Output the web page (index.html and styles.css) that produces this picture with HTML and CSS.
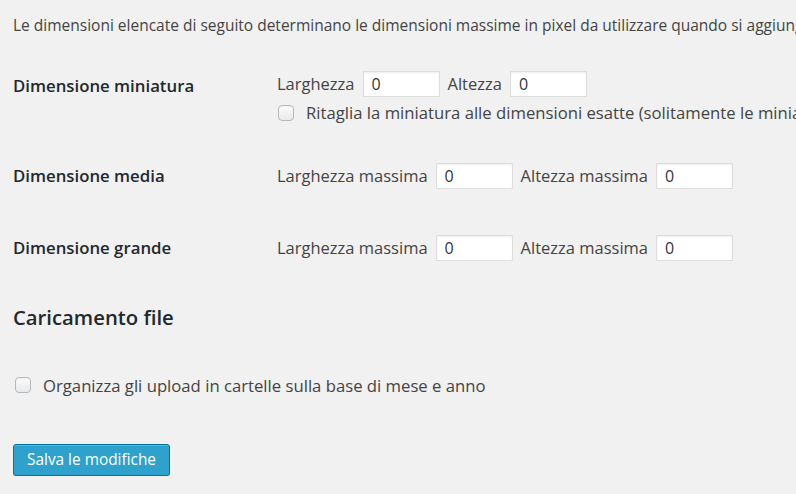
FILE: index.html
```html
<!DOCTYPE html>
<html lang="it">
<head>
    <meta charset="UTF-8">
    <meta name="viewport" content="width=device-width, initial-scale=1.0">
    <title>Impostazioni media</title>
    <link rel="stylesheet" href="styles.css">
</head>
<body>
    <div class="wrap">
        <p class="intro">Le dimensioni elencate di seguito determinano le dimensioni massime in pixel da utilizzare quando si aggiunge un'immagine alla libreria media.</p>

        <div class="form-table">
            <div class="row row-thumb">
                <div class="th">Dimensione miniatura</div>
                <div class="td">
                    <div class="fields">
                        <label>Larghezza</label>
                        <input type="text" class="small-text" value="0">
                        <label>Altezza</label>
                        <input type="text" class="small-text" value="0">
                    </div>
                    <label class="check">
                        <input type="checkbox">
                        Ritaglia la miniatura alle dimensioni esatte (solitamente le miniature sono proporzionali)
                    </label>
                </div>
            </div>
            <div class="row">
                <div class="th">Dimensione media</div>
                <div class="td">
                    <div class="fields">
                        <label>Larghezza massima</label>
                        <input type="text" class="small-text" value="0">
                        <label>Altezza massima</label>
                        <input type="text" class="small-text" value="0">
                    </div>
                </div>
            </div>
            <div class="row">
                <div class="th">Dimensione grande</div>
                <div class="td">
                    <div class="fields">
                        <label>Larghezza massima</label>
                        <input type="text" class="small-text" value="0">
                        <label>Altezza massima</label>
                        <input type="text" class="small-text" value="0">
                    </div>
                </div>
            </div>
        </div>

        <h2>Caricamento file</h2>

        <label class="check check-upload">
            <input type="checkbox">
            Organizza gli upload in cartelle sulla base di mese e anno
        </label>

        <p class="submit">
            <button class="button-primary">Salva le modifiche</button>
        </p>
    </div>
</body>
</html>
```

FILE: styles.css
```css
html, body {
    margin: 0;
    padding: 0;
    background: #f1f1f1;
    overflow: hidden;
}
body {
    font-family: "Open Sans", sans-serif;
    font-size: 16.5px;
    color: #444;
}
.wrap {
    padding: 0 0 0 13px;
    width: 1200px;
}
.intro {
    margin: 15px 0 0;
    font-size: 15.5px;
    line-height: 20px;
    white-space: nowrap;
}
.form-table {
    margin-top: 36px;
}
.row {
    display: flex;
}
.row + .row {
    margin-top: 42px;
}
.row:last-child {
    margin-top: 46px;
}
.th {
    width: 264px;
    flex-shrink: 0;
    font-size: 16.8px;
    font-weight: 600;
    color: #23282d;
    line-height: 26px;
}
.row-thumb .th {
    padding-top: 2px;
}
.td {
    line-height: 26px;
}
.fields {
    display: flex;
    align-items: center;
    gap: 8px;
}
.small-text {
    width: 77px;
    height: 26px;
    box-sizing: border-box;
    border: 1px solid #ddd;
    background: #fff;
    box-shadow: inset 0 1px 2px rgba(0, 0, 0, 0.07);
    padding: 0 8px;
    font-family: "Open Sans", sans-serif;
    font-size: 16px;
    color: #32373c;
    margin: 0;
}
.check {
    display: flex;
    align-items: center;
    gap: 12px;
    white-space: nowrap;
    height: 16px;
    margin-top: 8px;
    padding-left: 1px;
    font-size: 16.7px;
}
.check input {
    appearance: none;
    -webkit-appearance: none;
    width: 16px;
    height: 16px;
    margin: 0;
    border: 1px solid #b4b9be;
    border-radius: 4px;
    background: linear-gradient(#fcfcfc, #e9e9e9);
    box-shadow: inset 0 1px 1px rgba(0, 0, 0, 0.05);
    flex-shrink: 0;
}
h2 {
    margin: 42px 0 0;
    font-size: 20.3px;
    font-weight: 600;
    color: #23282d;
    line-height: 28px;
}
.check-upload {
    margin-top: 46px;
    padding-left: 2px;
}
.submit {
    margin: 51px 0 0;
}
.button-primary {
    height: 32px;
    padding: 0 13px 2px;
    font-family: "Open Sans", sans-serif;
    font-size: 15.4px;
    color: #fff;
    background: #2ea2cc;
    border: 1px solid #0074a2;
    border-radius: 3px;
    box-shadow: inset 0 1px 0 rgba(120, 200, 230, 0.5), 0 1px 0 rgba(0, 0, 0, 0.15);
    cursor: pointer;
}
```
